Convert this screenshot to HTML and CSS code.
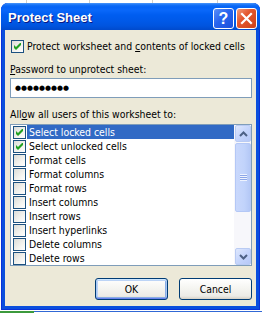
FILE: index.html
```html
<!DOCTYPE html>
<html>
<head>
<meta charset="utf-8">
<link rel="stylesheet" href="styles.css">
</head>
<body>
<div class="desk">
  <div class="window">
    <div class="titlebar">
      <span class="title">Protect Sheet</span>
      <div class="tbtns">
        <span class="tb help">?</span>
        <span class="tb close"><svg width="13" height="13" viewBox="0 0 13 13"><path d="M2 2 L11 11 M11 2 L2 11" stroke="#fff" stroke-width="2.2" stroke-linecap="square" fill="none"/></svg></span>
      </div>
    </div>
    <div class="client">
      <div class="chkrow">
        <span class="cb"><svg class="ck" width="7" height="7" viewBox="0 0 7 7"><path d="M0 2 L0 5 L2 7 L7 2 L7 -1 L2 4 Z" fill="#21a121"/></svg></span>
        <span class="txt">Protect worksheet and <u>c</u>ontents of locked cells</span>
      </div>
      <div class="lbl pw"><u>P</u>assword to unprotect sheet:</div>
      <div class="input"><span class="dots">●●●●●●●●●</span></div>
      <div class="lbl allow">All<u>o</u>w all users of this worksheet to:</div>
      <div class="list">
        <div class="items">
          <div class="item"><span class="cb"><svg class="ck" width="7" height="7" viewBox="0 0 7 7"><path d="M0 2 L0 5 L2 7 L7 2 L7 -1 L2 4 Z" fill="#21a121"/></svg></span><span class="itxt sel">Select locked cells</span></div>
          <div class="item"><span class="cb"><svg class="ck" width="7" height="7" viewBox="0 0 7 7"><path d="M0 2 L0 5 L2 7 L7 2 L7 -1 L2 4 Z" fill="#21a121"/></svg></span><span class="itxt">Select unlocked cells</span></div>
          <div class="item"><span class="cb"></span><span class="itxt">Format cells</span></div>
          <div class="item"><span class="cb"></span><span class="itxt">Format columns</span></div>
          <div class="item"><span class="cb"></span><span class="itxt">Format rows</span></div>
          <div class="item"><span class="cb"></span><span class="itxt">Insert columns</span></div>
          <div class="item"><span class="cb"></span><span class="itxt">Insert rows</span></div>
          <div class="item"><span class="cb"></span><span class="itxt">Insert hyperlinks</span></div>
          <div class="item"><span class="cb"></span><span class="itxt">Delete columns</span></div>
          <div class="item"><span class="cb"></span><span class="itxt">Delete rows</span></div>
        </div>
        <div class="scroll">
          <div class="sbtn"><svg width="9" height="6" viewBox="0 0 9 6"><path d="M1 5 L4.5 1.5 L8 5" stroke="#4d6185" stroke-width="2" fill="none"/></svg></div>
          <div class="thumb"><span class="grip"></span></div>
          <div class="track"></div>
          <div class="sbtn"><svg width="9" height="6" viewBox="0 0 9 6"><path d="M1 1 L4.5 4.5 L8 1" stroke="#4d6185" stroke-width="2" fill="none"/></svg></div>
        </div>
      </div>
      <div class="buttons">
        <div class="btn default"><span>OK</span></div>
        <div class="btn"><span>Cancel</span></div>
      </div>
    </div>
  </div>
  <div class="taskbar"><span class="start"></span></div>
</div>
</body>
</html>
```
FILE: styles.css
```css
html, body {
  margin: 0;
  padding: 0;
  width: 262px;
  height: 313px;
  overflow: hidden;
  background: #ffffff;
}
.desk {
  width: 262px;
  height: 313px;
  display: flex;
  flex-direction: column;
  background-image: linear-gradient(to right, transparent 26px, #d4d0c8 26px, #d4d0c8 27px, transparent 27px, transparent 89px, #d4d0c8 89px, #d4d0c8 90px, transparent 90px, transparent 152px, #d4d0c8 152px, #d4d0c8 153px, transparent 153px, transparent 217px, #d4d0c8 217px, #d4d0c8 218px, transparent 218px);
  font-family: "DejaVu Sans Condensed", "DejaVu Sans", sans-serif;
  font-size: 10.4px;
  color: #000;
}
.window {
  margin: 3px 0 0 1px;
  width: 259px;
  height: 307px;
  display: flex;
  flex-direction: column;
  background: #0a4fdd;
  border-radius: 7px 7px 0 0;
  box-shadow: inset 1px 0 0 #0831d9, inset -1px 0 0 #0831d9, inset 0 -1px 0 #0831d9;
  flex: none;
}
.titlebar {
  height: 27px;
  flex: none;
  display: flex;
  align-items: flex-start;
  justify-content: space-between;
  padding: 0 3px 0 7px;
  border-radius: 7px 7px 0 0;
  background: linear-gradient(to bottom, #4a96fa 0px, #1470f6 2px, #0563f5 4px, #0a68fa 7px, #005df0 12px, #0059e8 18px, #0054de 23px, #004acc 27px);
}
.title {
  margin-top: 7px;
  font-family: "Liberation Sans", Arial, sans-serif;
  font-weight: bold;
  font-size: 13px;
  line-height: 16px;
  color: #fff;
  text-shadow: 1px 1px 0 #0a1883;
}
.tbtns {
  display: flex;
  gap: 2px;
  margin-top: 5px;
}
.tb {
  width: 21px;
  height: 21px;
  box-sizing: border-box;
  border: 1px solid #fff;
  border-radius: 3px;
  display: flex;
  align-items: center;
  justify-content: center;
  color: #fff;
}
.help {
  background: linear-gradient(135deg, #5a8ff8 0%, #2864ee 45%, #1a50da 100%);
  font-family: "Liberation Sans", Arial, sans-serif;
  font-weight: bold;
  font-size: 16px;
  line-height: 19px;
}
.close {
  background: linear-gradient(135deg, #f09a7a 0%, #e4572e 40%, #cd4218 100%);
}
.client {
  flex: 1;
  margin: 0 4px 4px 4px;
  background: #ece9d8;
  padding: 10px 4px 0 5px;
  display: flex;
  flex-direction: column;
}
.chkrow {
  display: flex;
  align-items: center;
  height: 13px;
  margin-left: 1px;
  gap: 3px;
}
.cb {
  width: 13px;
  height: 13px;
  box-sizing: border-box;
  border: 1px solid #1c5180;
  background: linear-gradient(135deg, #dcdcd7 0%, #f3f3ef 60%, #ffffff 100%);
  display: flex;
  align-items: center;
  justify-content: center;
  flex: none;
}
.txt, .lbl, .itxt {
  line-height: 13px;
  white-space: nowrap;
}
.lbl.pw {
  margin-top: 10px;
}
.input {
  margin-top: 2px;
  height: 20px;
  box-sizing: border-box;
  border: 1px solid #7f9db9;
  background: #fff;
  display: flex;
  align-items: center;
  padding-left: 4px;
}
.dots {
  font-family: "DejaVu Sans", sans-serif;
  font-size: 6.9px;
  letter-spacing: 0px;
  line-height: 10px;
}
.lbl.allow {
  margin-top: 10px;
}
.list {
  margin-top: 3px;
  height: 142px;
  box-sizing: border-box;
  border: 1px solid #7f9db9;
  background: #fff;
  display: flex;
}
.items {
  flex: 1;
  display: flex;
  flex-direction: column;
}
.item {
  height: 14px;
  display: flex;
  align-items: center;
  padding-left: 2px;
}
.itxt {
  flex: 1;
  height: 14px;
  line-height: 14px;
  margin-left: 1px;
  padding-left: 2px;
}
.itxt.sel {
  background: #316ac5;
  color: #fff;
}
.scroll {
  width: 17px;
  display: flex;
  flex-direction: column;
  background: #f7f7fb;
  padding: 0 0 0 1px;
  box-sizing: border-box;
}
.sbtn {
  height: 17px;
  box-sizing: border-box;
  border: 1px solid #b9cbf3;
  border-radius: 2px;
  background: linear-gradient(135deg, #dfe8fd 0%, #c5d5fc 50%, #b7c9f7 100%);
  display: flex;
  align-items: center;
  justify-content: center;
  flex: none;
}
.thumb {
  height: 69px;
  margin-top: 1px;
  box-sizing: border-box;
  border: 1px solid #b4c8f6;
  border-radius: 2px;
  background: linear-gradient(to right, #c9d8fc 0%, #c1d3fb 60%, #b4c8f6 100%);
  display: flex;
  align-items: center;
  justify-content: center;
  flex: none;
}
.grip {
  width: 7px;
  height: 7px;
  background: repeating-linear-gradient(to bottom, #eef3fe 0px, #eef3fe 1px, #8ca6e8 1px, #8ca6e8 2px);
}
.track {
  flex: 1;
}
.buttons {
  margin-top: 12px;
  display: flex;
  justify-content: flex-end;
  gap: 11px;
  padding-right: 0px;
}
.btn {
  width: 73px;
  height: 22px;
  box-sizing: border-box;
  border: 1px solid #003c74;
  border-radius: 3px;
  background: linear-gradient(to bottom, #ffffff 0%, #f4f4f0 50%, #ecebe6 85%, #d6d0c5 100%);
  display: flex;
  align-items: center;
  justify-content: center;
  line-height: 13px;
}
.btn.default {
  box-shadow: inset 0 1px 0 #cee7ff, inset 0 -1px 0 #6982ee, inset 1px 0 0 #a9c8f5, inset -1px 0 0 #a9c8f5, inset 0 2px 0 #bcd4f6, inset 0 -2px 0 #89ade4, inset 2px 0 0 #bcd4f6, inset -2px 0 0 #89ade4;
}
.taskbar {
  flex: 1;
  display: flex;
  align-items: flex-end;
  background: linear-gradient(to bottom, #ffffff 0px, #ffffff 1px, #3168d5 1px, #3168d5 2px, #ffffff 2px);
}
.start {
  width: 34px;
  height: 2px;
  background: #3c9a3c;
}
```
